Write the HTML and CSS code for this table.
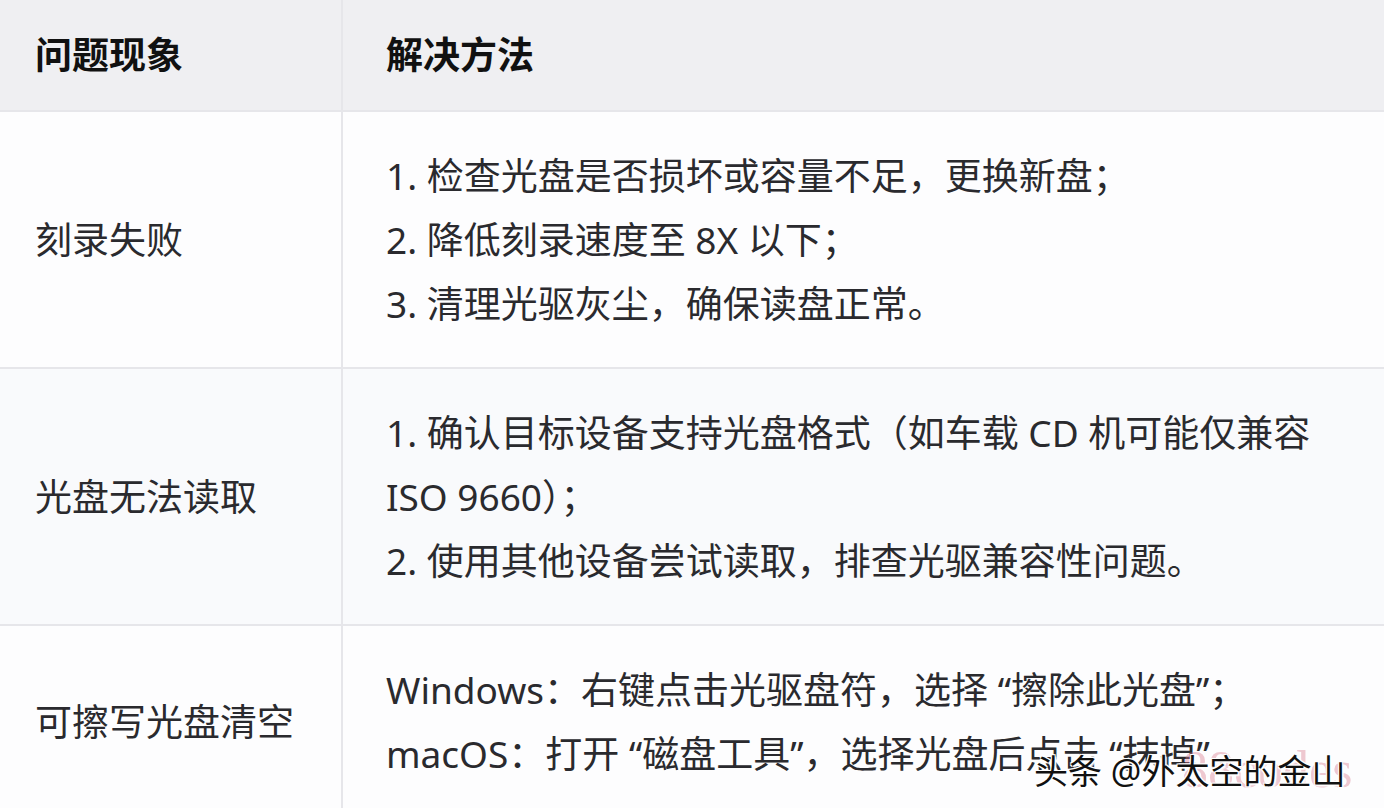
FILE: index.html
```html
<!DOCTYPE html>
<html lang="zh-CN">
<head>
    <meta charset="UTF-8">
    <meta name="viewport" content="width=device-width, initial-scale=1.0">
    <title>光盘问题解决方法</title>
    <link rel="stylesheet" href="styles.css">
</head>
<body>
    <table class="faq">
        <thead>
            <tr>
                <th class="col-issue">问题现象</th>
                <th class="col-fix">解决方法</th>
            </tr>
        </thead>
        <tbody>
            <tr>
                <td class="col-issue">刻录失败</td>
                <td class="col-fix">
                    <div>1. 检查光盘是否损坏或容量不足，更换新盘；</div>
                    <div>2. 降低刻录速度至 8X 以下；</div>
                    <div>3. 清理光驱灰尘，确保读盘正常。</div>
                </td>
            </tr>
            <tr class="alt">
                <td class="col-issue">光盘无法读取</td>
                <td class="col-fix">
                    <div>1. 确认目标设备支持光盘格式（如车载 CD 机可能仅兼容<br>ISO 9660）；</div>
                    <div>2. 使用其他设备尝试读取，排查光驱兼容性问题。</div>
                </td>
            </tr>
            <tr>
                <td class="col-issue">可擦写光盘清空</td>
                <td class="col-fix">
                    <div>Windows：右键点击光驱盘符，选择 “擦除此光盘”；</div>
                    <div>macOS：打开 “磁盘工具”，选择光盘后点击 “抹掉”。</div>
                </td>
            </tr>
        </tbody>
    </table>

    <div class="mark">
        <span class="mark-pink">88codes</span>
        <span class="mark-text">头条 @外太空的金山</span>
    </div>
</body>
</html>
```

FILE: styles.css
```css
html, body { margin: 0; padding: 0; background: #fbfbfd; overflow: hidden; }
body { font-family: "Noto Sans", "Noto Sans CJK SC", sans-serif; color: #2a2a2e; width: 1384px; height: 808px; position: relative; }

.faq { width: 100%; border-collapse: collapse; font-size: 37px; line-height: 64px; }
.faq th, .faq td { text-align: left; vertical-align: middle; border-bottom: 2px solid #e6e6ea; }
.faq th { background: #efeff2; font-weight: 700; color: #111; padding: 22px 0 23px; height: 65px; }
.faq td { background: #fdfdfe; padding: 32px 0 31px; }
.faq tr.alt td { background: #f9fafc; }

.col-issue { width: 306px; padding-left: 35px !important; border-right: 2px solid #e6e6ea; }
.col-fix { padding-left: 43px !important; }

.mark { position: absolute; left: 1034px; top: 744px; width: 350px; height: 60px; }
.mark-text { position: absolute; left: 0; top: 4px; font-size: 34px; line-height: 46px; color: #111; white-space: nowrap;
    text-shadow: 1px 1px 0 #fff, -1px -1px 0 #fff, 1px -1px 0 #fff, -1px 1px 0 #fff, 2px 2px 1px rgba(255,255,255,.8); }
.mark-pink { position: absolute; left: 148px; top: 0; font-family: "Liberation Serif", serif; font-size: 52px; line-height: 52px;
    color: rgba(214, 120, 140, 0.4); white-space: nowrap; }
```
